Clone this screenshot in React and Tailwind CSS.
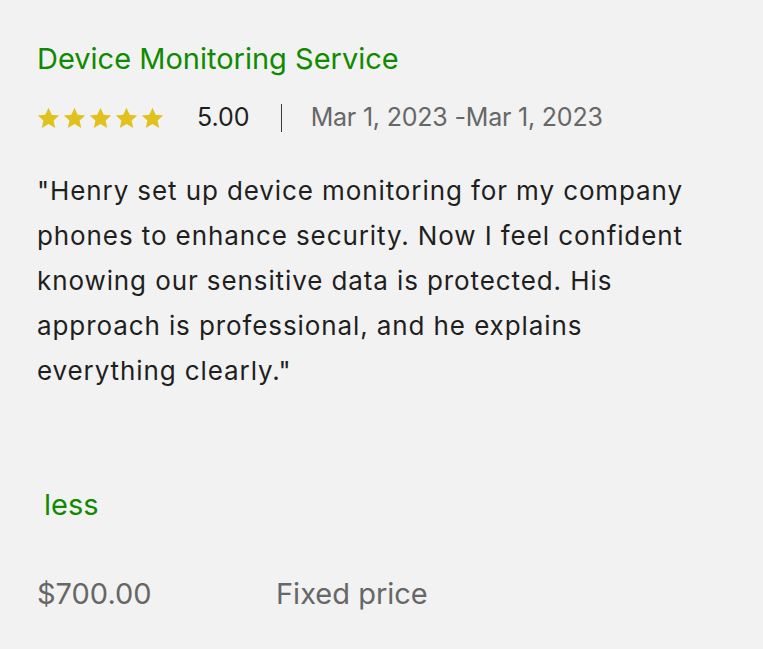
const font = { fontFamily: 'Inter, "Liberation Sans", Arial, sans-serif' }

function Stars() {
  return (
    <div className="flex items-center gap-[3px]">
      {[0, 1, 2, 3, 4].map(i => (
        <svg key={i} width="23" height="22" viewBox="0 0 24 23">
          <path d="M12 0.8l3.3 7.2 7.9 0.8-5.9 5.3 1.7 7.8L12 17.9l-7 4 1.7-7.8-5.9-5.3 7.9-0.8z" fill="#e1c11e" />
        </svg>
      ))}
    </div>
  )
}

const lines = [
  '"Henry set up device monitoring for my company',
  'phones to enhance security. Now I feel confident',
  'knowing our sensitive data is protected. His',
  'approach is professional, and he explains',
  'everything clearly."',
]

export default function App() {
  return (
    <div className="min-h-[649px] w-[763px] bg-[#f2f2f2] pl-[37px] pt-[41px]" style={font}>
      <h2 className="text-[29px] leading-[36px] text-[#108a00]">Device Monitoring Service</h2>

      <div className="mt-[25px] flex items-center h-[32px]">
        <Stars />
        <span className="ml-[33px] text-[25px] text-[#1f1f1f]">5.00</span>
        <span className="ml-[31px] w-px h-[28px] bg-[#3a3a3a]" />
        <span className="ml-[29px] text-[25px] tracking-[-0.2px] text-[#676767]">Mar 1, 2023 -Mar 1, 2023</span>
      </div>

      <div className="mt-[34px] text-[26px] leading-[45px] tracking-[0.9px] text-[#1f1f1f]">
        {lines.map(l => (
          <div key={l} className="whitespace-nowrap">{l}</div>
        ))}
      </div>

      <div className="mt-[92px] pl-[7px] text-[29px] leading-[40px] text-[#108a00]">less</div>

      <div className="mt-[51px] flex items-center text-[29px] leading-[36px] text-[#676767]">
        <span className="w-[239px]">$700.00</span>
        <span>Fixed price</span>
      </div>
    </div>
  )
}
